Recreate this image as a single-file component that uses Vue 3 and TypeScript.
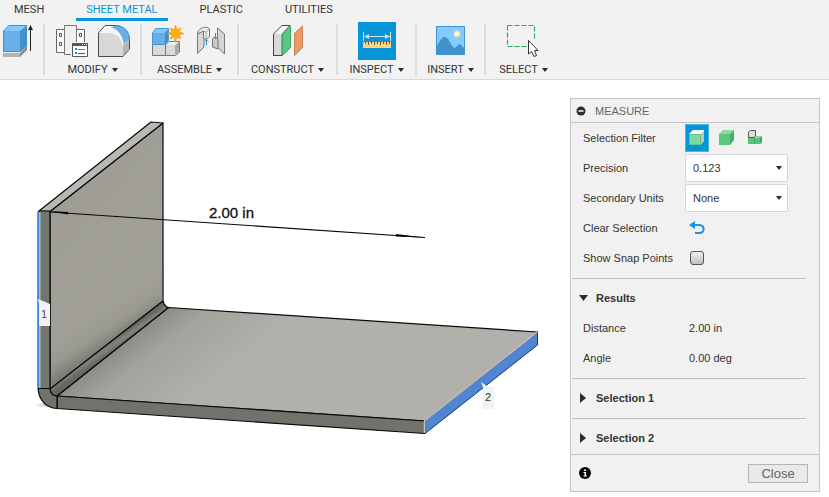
<script setup lang="ts">
import { ref } from 'vue'

const tabs: string[] = ['MESH', 'SHEET METAL', 'PLASTIC', 'UTILITIES']
const activeTab = ref('SHEET METAL')
const filters: string[] = ['Face', 'Body', 'Component']
const filter = ref('Face')
const precision = ref('0.123')
const units = ref('None')
const snap = ref(false)
const resultsOpen = ref(true)
const results = [
  { name: 'Distance', value: '2.00 in' },
  { name: 'Angle', value: '0.00 deg' },
]
const selections: string[] = ['Selection 1', 'Selection 2']
</script>

<template>
  <div class="app">
    <header class="ribbon">
      <nav class="tabs">
        <button v-for="t in tabs" :key="t" type="button" :class="['tab', { active: t === activeTab }]" @click="activeTab = t">{{ t }}</button>
      </nav>
      <div class="groups">
        <section class="group first">
          <div class="tools">
            <button type="button" class="tool" aria-label="Extrude">
              <svg width="36" height="38" viewBox="0 22 36 38">
                <path d="M3 53H20V57H3Z" fill="#b4b4b4" /><path d="M20 53L27 46V50L20 57Z" fill="#8c8c8c" />
                <path d="M3 31L9 25H27L20 31Z" fill="#86c9ff" /><path d="M3 31H20V52H3Z" fill="#69afe5" /><path d="M20 31L27 25V46L20 52Z" fill="#3f92cf" />
                <path d="M3.500 31L9 25.500H26.500V46L20 51.500H3.500Z" fill="none" stroke="#3e91cf" />
                <path d="M30.500 29V51" stroke="#222" /><path d="M30.500 25L33 30H28Z" fill="#222" />
              </svg>
            </button>
          </div>
        </section>
        <section class="group">
          <div class="tools">
            <button type="button" class="tool" aria-label="Sheet metal rules">
              <svg width="38" height="38" viewBox="52 22 38 38">
                <path d="M56.500 29.500H64.500V52.500H56.500ZM76.500 29.500H84.500V52.500H76.500Z" fill="#fafafa" stroke="#666" />
                <path d="M64.500 25.500H76.500V54.500H64.500Z" fill="#f0f0f0" stroke="#777" />
                <path d="M59.500 33.500H61.500V36.500H59.500ZM59.500 42.500H61.500V45.500H59.500ZM79.500 33.500H81.500V36.500H79.500Z" fill="#fff" stroke="#555" />
                <path d="M71 42H89V58H71Z" fill="#f2f2f2" />
                <path d="M72.500 43.500H87.500V56.500H72.500Z" fill="#fff" stroke="#555" /><path d="M72 43H88V46H72Z" fill="#555" />
                <path d="M82 44.500H83M84 44.500H85M86 44.500H87" stroke="#fff" /><path d="M75 49H77M75 53H77" stroke="#1592e6" stroke-width="2" /><path d="M78 49.500H85" stroke="#1592e6" /><path d="M78 53.500H85" stroke="#555" />
              </svg>
            </button>
            <button type="button" class="tool" aria-label="Fillet">
              <svg width="38" height="38" viewBox="96 22 38 38">
                <path d="M99.500 33L106 25.500H117C125 26 130.500 33 130.500 42V49L124 56.500H99.500Z" fill="#f7f7f7" stroke="#4b4b4b" />
                <path d="M124 45L130 40V49L124 56Z" fill="#b5b5b5" />
                <path d="M100 33H109C118 33 123 39 124 47V56H100Z" fill="#d8d8d8" />
                <path d="M111.500 27.500L117 25.500C125 26 130 31 131 39L124.500 44C124 36 119 29 111.500 27.500Z" fill="#69afe5" /><path d="M117 25.500C125 26 130 31 130.500 39" fill="none" stroke="#3f8cc7" />
              </svg>
            </button>
          </div>
          <button type="button" class="menu">MODIFY<i class="caret"></i></button>
        </section>
        <section class="group">
          <div class="tools">
            <button type="button" class="tool" aria-label="New component">
              <svg width="38" height="38" viewBox="150 22 38 38">
                <path d="M153.500 45H166.500L170 41.500H180.500V52L176.500 55.500H153.500Z" fill="#ececec" stroke="#777" />
                <path d="M154 45H166V55H154ZM167 45H176V55H167Z" fill="#d9d9d9" /><path d="M166.500 45V55" stroke="#777" /><path d="M176 45L180 42V52L176 55Z" fill="#aaa" />
                <path d="M153 33L157 28.500H170V40L166 45H153Z" fill="#69afe5" /><path d="M153 33L157 28.500H170L166 33Z" fill="#83c8fc" /><path d="M166 33L170 29V40L166 45Z" fill="#3c8ec9" /><path d="M153.500 33L157 28.500H169.500V40L166 44.500H153.500Z" fill="none" stroke="#4795cd" />
                <path d="M176.500 25L178 29.800L182 28L180.200 32L185 33.500L180.200 35L182 39L178 37.200L176.500 42L175 37.200L171 39L172.800 35L168 33.500L172.800 32L171 28L175 29.800Z" fill="#ffad12" stroke="#e99500" stroke-width=".6" />
              </svg>
            </button>
            <button type="button" class="tool" aria-label="Joint">
              <svg width="38" height="38" viewBox="193 22 38 38">
                <path d="M198.500 34.500L205 30V47L198.500 53.500Z" fill="#d8d8d8" stroke="#777" />
                <path d="M198.500 34C199 29 204 26.500 208.500 27.500L210.500 29V37L207 39.500L204.500 38V31Z" fill="#ededed" stroke="#777" />
                <path d="M204.500 31L207 32L210.500 29M207 32V39" fill="none" stroke="#aaa" />
                <path d="M218.500 28L225.500 34V54L218.500 47Z" fill="#d5d5d5" stroke="#777" />
                <path d="M213.500 39C214 37 218 37 219 39V49L213.500 47Z" fill="#c9c9c9" stroke="#777" />
                <path d="M207.500 40V45M216.500 33V39" stroke="#1b90dc" /><path d="M205.500 41.500L207.500 39.500L209.500 41.500M214.500 36.500L216.500 38.500L218.500 36.500" fill="none" stroke="#1b90dc" stroke-width=".7" />
              </svg>
            </button>
          </div>
          <button type="button" class="menu">ASSEMBLE<i class="caret"></i></button>
        </section>
        <section class="group">
          <div class="tools">
            <button type="button" class="tool" aria-label="Offset plane">
              <svg width="38" height="38" viewBox="269 22 38 38">
                <path d="M273.500 34L282 25.500H290L282 34V55.500H273.500Z" fill="#f7f7f7" stroke="#444" /><path d="M274 34H281V55H274Z" fill="#d9d9d9" />
                <path d="M282.500 33.500L290.500 26V47.500L282.500 55.500Z" fill="#5bc586" stroke="#38a866" /><path d="M294.500 33.500L302.500 26V47.500L294.500 55.500Z" fill="#e89a68" stroke="#d0824e" />
              </svg>
            </button>
          </div>
          <button type="button" class="menu">CONSTRUCT<i class="caret"></i></button>
        </section>
        <section class="group">
          <div class="tools">
            <button type="button" class="tool selected" aria-label="Measure">
              <svg width="38" height="38" viewBox="358 22 38 38">
                <path d="M363.500 32V41M390.500 32V41M365 36.500H390" stroke="#d8e2e8" /><path d="M364 36.500L369 34V39ZM390 36.500L385 34V39Z" fill="#d8e2e8" />
                <path d="M363 42H391V48H363Z" fill="#ffd37c" /><path d="M365.500 42V44M368.500 42V45M371.500 42V44M374.500 42V45M377.500 42V44M380.500 42V45M383.500 42V44M386.500 42V45M389.500 42V44" stroke="#715f38" />
              </svg>
            </button>
          </div>
          <button type="button" class="menu">INSPECT<i class="caret"></i></button>
        </section>
        <section class="group">
          <div class="tools">
            <button type="button" class="tool" aria-label="Canvas">
              <svg width="38" height="38" viewBox="432 22 38 38">
                <path d="M436.500 26.500H464.500V54.500H436.500Z" fill="#84caff" />
                <path d="M437 46L441 39Q444.500 35 448 39L453 47L455 48L458 45Q460 43 462 46L464 48V54H437Z" fill="#4093cd" />
                <circle cx="457" cy="34" r="3.200" fill="#fdf7c5" stroke="#c7d7b5" /><path d="M436.500 26.500H464.500V54.500H436.500Z" fill="none" stroke="#3f94d2" />
              </svg>
            </button>
          </div>
          <button type="button" class="menu">INSERT<i class="caret"></i></button>
        </section>
        <section class="group last">
          <div class="tools">
            <button type="button" class="tool" aria-label="Select">
              <svg width="38" height="38" viewBox="505 22 38 38">
                <path d="M507.500 25.500H534.500V40M507.500 25.500V46.500H528" fill="none" stroke="#27b35b" stroke-width="1.200" stroke-dasharray="5 2" />
                <path d="M528.500 40.500V54L531.500 51.500L534 56.500L536.500 55.500L534.500 50.500H538Z" fill="#fff" stroke="#333" />
              </svg>
            </button>
          </div>
          <button type="button" class="menu">SELECT<i class="caret"></i></button>
        </section>
      </div>
    </header>

    <main class="workspace">
      <svg class="model" viewBox="0 80 570 417" role="img" aria-label="Bent sheet metal part">
        <defs>
          <linearGradient id="wall" x1="0" y1="0" x2=".5" y2="1"><stop offset="0" stop-color="#9d9b92" /><stop offset="1" stop-color="#a3a29a" /></linearGradient>
          <linearGradient id="wallShade" gradientUnits="userSpaceOnUse" x1="89" y1="318" x2="107" y2="345"><stop offset="0" stop-color="#686862" stop-opacity="0" /><stop offset=".6" stop-color="#686862" stop-opacity=".15" /><stop offset="1" stop-color="#686862" stop-opacity=".6" /></linearGradient>
          <linearGradient id="floor" gradientUnits="userSpaceOnUse" x1="112" y1="352" x2="165" y2="420"><stop offset="0" stop-color="#8d8d87" /><stop offset=".3" stop-color="#a3a29c" /><stop offset="1" stop-color="#b1b0aa" /></linearGradient>
          <linearGradient id="bend" gradientUnits="userSpaceOnUse" x1="107" y1="343" x2="113" y2="352"><stop offset="0" stop-color="#666761" /><stop offset=".45" stop-color="#83837e" /><stop offset="1" stop-color="#65665f" /></linearGradient>
          <radialGradient id="shadow"><stop offset="0" stop-color="#777" stop-opacity=".5" /><stop offset="1" stop-color="#aaa" stop-opacity="0" /></radialGradient>
        </defs>
        <ellipse cx="46" cy="405" rx="12" ry="3" fill="url(#shadow)" />
        <g stroke="#080808" stroke-width="1.200" stroke-linejoin="round">
          <path d="M50 211.500L163 123V301L50 389Z" fill="url(#wall)" />
          <path d="M50 211.500L163 123V301L50 389Z" fill="url(#wallShade)" stroke="none" />
          <path d="M39 211L151 122L163 123L50 211.500Z" fill="#b9b9b4" />
          <path d="M57 396L168.500 307.500L537.500 332L425 421Z" fill="url(#floor)" />
          <path d="M50 389L163 301C164 305 165 307 168.500 307.500L57 396C52 396 50 393 50 389Z" fill="url(#bend)" />
          <path d="M57 396L425 421V433.500L57 408.500Z" fill="#70726b" />
          <path d="M38 388.500H50C50 393 53 396 57 396V408.500C46 408 39 400 38 388.500Z" fill="#70726b" />
          <path d="M39 211H50V388.500H39Z" fill="#73766f" />
        </g>
        <path d="M39.500 212V388" stroke="#b8b7b0" stroke-width="2" />
        <path d="M38 211V388" stroke="#1580ee" stroke-width="1.500" />
        <path d="M425 421L537.500 332V345L425 433.500Z" fill="#5185d1" stroke="#153b7c" />
        <path d="M424.500 433V421L537 332" fill="none" stroke="#c9c6bd" stroke-width="1.500" />
        <path d="M50 212L425 237.500" stroke="#080808" stroke-width="1.200" />
        <path d="M50 211L68 212V214.500ZM424 237.500L396 234V236.500Z" fill="#080808" />
        <text class="dimension" x="209" y="218">2.00 in</text>
        <path d="M38 299L50 304V326H39V304Z" fill="#f2f2f2" /><text class="tag one" x="41" y="318">1</text>
        <path d="M481 382L488 387H494V409H483V387Z" fill="#f2f2f2" /><text class="tag" x="485" y="401">2</text>
      </svg>

      <aside class="panel">
        <h2 class="title">
          <button type="button" class="plain" aria-label="Collapse"><svg width="10" height="10" viewBox="0 0 10 10"><circle cx="5" cy="5" r="4.500" fill="#2e2e2e" /><path d="M2.500 5H7.500" stroke="#fff" stroke-width="1.500" /></svg></button>
          MEASURE
        </h2>
        <section class="block settings">
          <div class="row">
            <span>Selection Filter</span>
            <div class="filters">
              <button v-for="f in filters" :key="f" type="button" :class="['filter', { on: filter === f }]" :aria-label="f" @click="filter = f">
                <svg v-if="f === 'Face'" width="20" height="20" viewBox="0 0 20 20"><path d="M2 6L6 2H17V13L13 17Z" fill="#f5f5f5" /><path d="M14 6L17 3V13L14 16Z" fill="#bfc3c8" /><path d="M2 6H14V17H2Z" fill="#7fd99c" /><path d="M2.500 6.500H13.500V16.500H2.500Z" fill="none" stroke="#65c288" /></svg>
                <svg v-else-if="f === 'Body'" width="20" height="20" viewBox="0 0 20 20"><path d="M3 6L7 2H18L14 6Z" fill="#83dca2" /><path d="M3 6H14V17H3Z" fill="#5bc67e" /><path d="M14 6L18 2V12L14 17Z" fill="#45b06c" /></svg>
                <svg v-else width="20" height="20" viewBox="0 0 20 20"><path d="M3 9H17V14L15 16H3Z" fill="#55c47b" /><path d="M9 10L11 8H17L15 10Z" fill="#83dca2" /><path d="M15 10L17 8V14L15 16Z" fill="#3eaa65" /><path d="M9.500 10V16" stroke="#3eaa65" /><path d="M3.500 4L5.500 2.500H10.500V8L8.500 9.500H3.500Z" fill="#ddd" stroke="#555" /></svg>
              </button>
            </div>
          </div>
          <div class="row">
            <label for="precision">Precision</label>
            <div class="select"><select id="precision" v-model="precision"><option>0.123</option></select><i class="caret"></i></div>
          </div>
          <div class="row">
            <label for="units">Secondary Units</label>
            <div class="select"><select id="units" v-model="units"><option>None</option></select><i class="caret"></i></div>
          </div>
          <div class="row">
            <span>Clear Selection</span>
            <button type="button" class="plain inset" aria-label="Clear Selection"><svg width="16" height="14" viewBox="0 0 16 14"><path d="M5 4H10.500C16 4 16 12 10 12H6" fill="none" stroke="#1b91e8" stroke-width="2" /><path d="M0 4L6 0V8Z" fill="#1b91e8" /></svg></button>
          </div>
          <div class="row">
            <label for="snap">Show Snap Points</label>
            <input id="snap" v-model="snap" class="check" type="checkbox" />
          </div>
        </section>
        <section class="block">
          <button type="button" class="heading" @click="resultsOpen = !resultsOpen"><i :class="['arrow', { open: resultsOpen }]"></i>Results</button>
          <dl v-if="resultsOpen" class="results">
            <div v-for="r in results" :key="r.name" class="row"><dt>{{ r.name }}</dt><dd>{{ r.value }}</dd></div>
          </dl>
        </section>
        <section v-for="s in selections" :key="s" class="block">
          <button type="button" class="heading"><i class="arrow"></i>{{ s }}</button>
        </section>
        <footer class="footer">
          <button type="button" class="plain" aria-label="Information"><svg width="12" height="12" viewBox="0 0 12 12"><circle cx="6" cy="6" r="6" fill="#050505" /><path d="M5 2.500H7V4H5ZM4.500 5H7V8.500H8V9.500H4.500V8.500H5.500V6H4.500Z" fill="#fff" /></svg></button>
          <button type="button" class="close">Close</button>
        </footer>
      </aside>
    </main>
  </div>
</template>

<style>
body { background: #fff; }
</style>

<style scoped>
.app { font: 11px/16px "Liberation Sans", Arial, sans-serif; color: #333; }
.app * { box-sizing: border-box; }
button { margin: 0; padding: 0; border: 0; background: none; color: inherit; font: inherit; cursor: pointer; }
svg { display: block; }
.ribbon { background: #f2f2f2; border-bottom: 1px solid #d8d8d8; }
.tabs { display: flex; gap: 22px; height: 22px; padding-left: 4px; }
.tab { height: 21px; padding: 2px 10px 0; line-height: 16px; font-family: Roboto, sans-serif; font-size: 11px; border-bottom: 3px solid transparent; }
.tab.active { color: #0696d7; border-color: #0696d7; }
.groups { display: grid; grid-template-columns: 45px 97px 97px 99px 79px 69px 77px; height: 57px; }
.group { display: flex; flex-direction: column; align-items: center; padding-right: 2px; background: linear-gradient(#dcdcdc, #dcdcdc) right 0 top 2px / 2px 51px no-repeat; }
.group.last { background: none; }
.group.first { align-items: flex-start; }
.tools { display: flex; gap: 5px; height: 38px; }
.tool.selected { background: #0696d7; }
.menu { display: flex; align-items: center; gap: 4px; height: 19px; padding-top: 1px; font-family: Roboto, sans-serif; white-space: nowrap; }
.caret { width: 0; height: 0; border: 3px solid transparent; border-top: 4px solid #2b2b2b; border-bottom: 0; }
.workspace { display: flex; align-items: flex-start; padding-right: 9px; }
.model { flex: 1; min-width: 0; }
.dimension { font-size: 15px; fill: #111; stroke: #111; stroke-width: .3px; }
.tag { font-size: 11px; fill: #333; }
.tag.one { fill: #713c7e; }
.panel { flex: none; width: 250px; margin-top: 18px; background: #f1f1f1; border: 1px solid #c6c6c6; }
.title { display: flex; align-items: center; gap: 9px; height: 24px; margin: 0; padding-left: 5px; border-bottom: 1px solid #c6c6c6; font-size: 11px; font-weight: 400; color: #666; }
.block { margin: 0 13px 0 1px; padding: 4px 0 5px; border-bottom: 1px solid #bdbdbd; }
.block.settings { padding-top: 0; }
.block:nth-last-child(2) { padding-bottom: 1px; border: 0; }
.row { display: grid; grid-template-columns: 102px 1fr; align-items: center; height: 30px; padding-left: 11px; }
.filters { display: flex; gap: 5px; }
.filter { display: grid; place-items: center; width: 24px; height: 28px; }
.filter.on { background: #0696d7; border: 1px solid #45b4e8; }
.select { position: relative; width: 103px; height: 28px; }
.select select { appearance: none; width: 100%; height: 100%; margin: 0; padding: 0 7px; background: #fff; border: 1px solid #d6d6d6; border-radius: 1px; color: #333; font: inherit; }
.select .caret { position: absolute; right: 6px; top: 12px; pointer-events: none; }
.plain { display: block; }
.inset { margin-left: 4px; justify-self: start; }
.check { appearance: none; width: 14px; height: 14px; margin: 0 0 0 5px; border: 1px solid #555; border-radius: 3px; background: linear-gradient(#f0f0f0, #bfbfbf); }
.check:checked { background: #0696d7; }
.heading { display: flex; align-items: center; gap: 8px; width: 100%; height: 30px; padding-left: 7px; font-weight: 700; text-align: left; }
.arrow { width: 9px; height: 10px; background: #2b2b2b; clip-path: polygon(11% 0, 78% 50%, 11% 100%); }
.arrow.open { height: 6px; clip-path: polygon(0 0, 100% 0, 50% 100%); }
.results { margin: 0; }
dd { margin: 0 0 0 4px; }
.footer { display: flex; align-items: center; justify-content: space-between; height: 37px; padding: 0 11px 0 8px; border-top: 1px solid #c6c6c6; }
.close { width: 60px; height: 19px; background: #e9e9e9; border: 1px solid #b5b5b5; color: #666; font-size: 13px; line-height: 17px; }
</style>
